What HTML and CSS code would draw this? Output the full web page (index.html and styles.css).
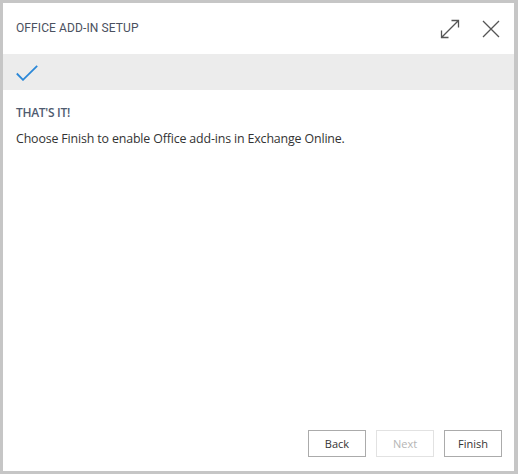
FILE: index.html
```html
<!DOCTYPE html>
<html>
<head>
<meta charset="utf-8">
<link rel="stylesheet" href="styles.css">
</head>
<body>
<div class="dialog">
  <div class="header">
    <div class="title">OFFICE ADD-IN SETUP</div>
    <div class="actions">
      <svg class="icon" width="20" height="20" viewBox="0 0 20 20"><path d="M1.5 18.5 L18.5 1.5 M11.5 1.5 H18.5 V8.5 M1.5 11.5 V18.5 H8.5" fill="none" stroke="#555" stroke-width="1.3"/></svg>
      <svg class="icon" width="18" height="18" viewBox="0 0 18 18"><path d="M1 1 L17 17 M17 1 L1 17" fill="none" stroke="#555" stroke-width="1.3"/></svg>
    </div>
  </div>
  <div class="band">
    <svg width="22" height="16" viewBox="0 0 22 16"><path d="M0.8 8.5 L7 14.8 L21.2 0.8" fill="none" stroke="#2b88d8" stroke-width="1.8"/></svg>
  </div>
  <div class="content">
    <div class="heading">THAT'S IT!</div>
    <p class="text">Choose Finish to enable Office add-ins in Exchange Online.</p>
  </div>
  <div class="footer">
    <button class="btn">Back</button>
    <button class="btn disabled">Next</button>
    <button class="btn">Finish</button>
  </div>
</div>
</body>
</html>
```
FILE: styles.css
```css
html, body { margin: 0; padding: 0; }
body { background: #c6c6c6; width: 518px; height: 474px; }
.dialog {
  box-sizing: border-box;
  margin: 3px 4px 3px 3px;
  width: 511px;
  height: 468px;
  background: #fff;
  display: flex;
  flex-direction: column;
}
.header {
  height: 51px;
  display: flex;
  align-items: center;
  justify-content: space-between;
  padding: 0 14px 0 13px;
}
.title {
  font-family: Roboto, "Liberation Sans", sans-serif;
  font-size: 12px;
  letter-spacing: 0.1px;
  color: #4a5160;
  margin-top: -2px;
}
.actions { display: flex; align-items: center; gap: 22px; margin-top: 1px; }
.icon { display: block; }
.band {
  height: 36px;
  background: #ececec;
  display: flex;
  align-items: center;
  padding-left: 13px;
}
.band svg { display: block; margin-top: 1px; }
.content { padding: 14px 13px 0; flex: 1; }
.heading {
  font-family: "Open Sans", sans-serif;
  font-weight: 600;
  font-size: 12px;
  color: #4f5b70;
  letter-spacing: -0.3px;
}
.text {
  margin: 9px 0 0;
  font-family: "Open Sans", sans-serif;
  font-size: 12.4px;
  color: #333;
  letter-spacing: -0.15px;
}
.footer {
  display: flex;
  justify-content: flex-end;
  gap: 10px;
  padding: 0 12px 14px;
}
.btn {
  box-sizing: border-box;
  width: 58px;
  height: 27px;
  background: #fff;
  border: 1px solid #ababab;
  font-family: "Open Sans", sans-serif;
  font-size: 11px;
  color: #333;
  padding: 0;
}
.btn.disabled { border-color: #e2e2e2; color: #b5b5b5; }
```
